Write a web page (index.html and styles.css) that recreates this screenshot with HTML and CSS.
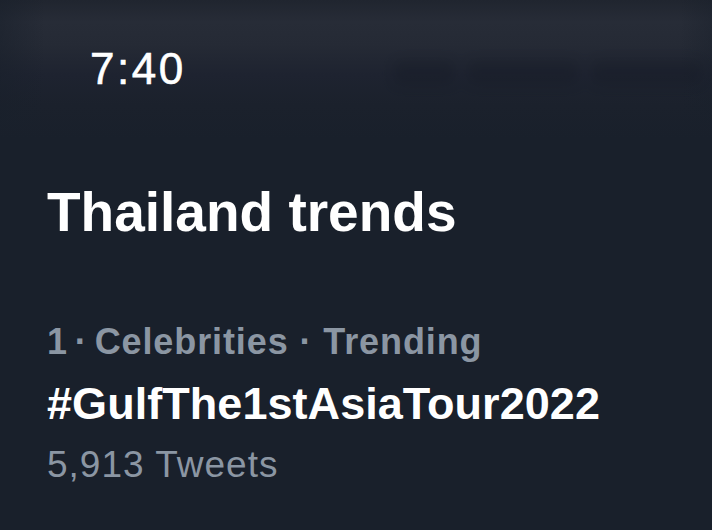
FILE: index.html
```html
<!DOCTYPE html>
<html lang="en">
<head>
<meta charset="utf-8">
<title>Thailand trends</title>
<link rel="stylesheet" href="styles.css">
</head>
<body>
<div class="screen">
  <header class="status">
    <span class="time">7:40</span>
    <div class="ghost" aria-hidden="true">
      <span class="ghost-bar g1"></span>
      <span class="ghost-bar g2"></span>
      <span class="ghost-bar g3"></span>
    </div>
  </header>
  <main class="content">
    <h1 class="title">Thailand trends</h1>
    <section class="trend">
      <div class="meta"><span class="rank">1 · </span>Celebrities · Trending</div>
      <div class="tag">#GulfThe1stAsiaTour2022</div>
      <div class="count">5,913 Tweets</div>
    </section>
  </main>
</div>
</body>
</html>
```
FILE: styles.css
```css
html, body {
  margin: 0;
  padding: 0;
  background: #19202b;
}
.screen {
  width: 712px;
  height: 530px;
  overflow: hidden;
  background: #19202b;
  font-family: "Liberation Sans", Arial, sans-serif;
  color: #f7f9f9;
}
.status {
  height: 140px;
  box-sizing: border-box;
  padding: 47px 0 0 90px;
  display: flex;
  align-items: flex-start;
  background:
    linear-gradient(to right, rgba(25,32,43,0.55) 0, rgba(25,32,43,0) 45px, rgba(25,32,43,0) 680px, rgba(25,32,43,0.4) 712px),
    linear-gradient(to bottom, #20252f 0, #272c37 22px, #252a35 45px, #1e2330 75px, #1b212c 105px, #19202b 140px);
}
.time {
  font-size: 44px;
  line-height: 1;
  letter-spacing: 2.5px;
  color: #ffffff;
  -webkit-text-stroke: 0.6px #ffffff;
}
.ghost {
  margin-left: auto;
  margin-top: 14px;
  margin-right: 10px;
  display: flex;
  gap: 14px;
  filter: blur(6px);
  opacity: 0.3;
}
.ghost-bar {
  display: block;
  height: 24px;
  background: #141923;
  border-radius: 6px;
}
.g1 { width: 60px; }
.g2 { width: 110px; }
.g3 { width: 110px; }
.content {
  padding: 45px 0 0 47px;
}
.title {
  margin: 0;
  font-size: 55px;
  line-height: 1;
  font-weight: 700;
  color: #ffffff;
}
.trend {
  margin-top: 84px;
}
.meta {
  font-size: 36px;
  line-height: 1;
  font-weight: 700;
  letter-spacing: 0.9px;
  color: #8b96a3;
}
.rank {
  word-spacing: -4px;
}
.tag {
  margin-top: 21px;
  font-size: 45px;
  line-height: 1;
  font-weight: 700;
  letter-spacing: 0.05px;
  color: #ffffff;
}
.count {
  margin-top: 20px;
  font-size: 37px;
  line-height: 1;
  letter-spacing: 1px;
  color: #8b96a3;
}
```
